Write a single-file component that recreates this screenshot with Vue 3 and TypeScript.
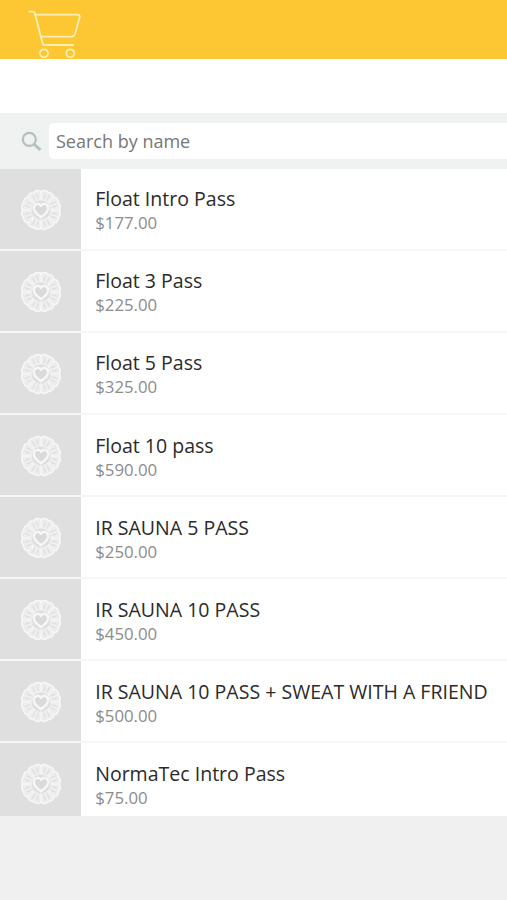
<script setup lang="ts">
interface Pass {
  name: string
  price: string
}

const passes: Pass[] = [
  { name: 'Float Intro Pass', price: '$177.00' },
  { name: 'Float 3 Pass', price: '$225.00' },
  { name: 'Float 5 Pass', price: '$325.00' },
  { name: 'Float 10 pass', price: '$590.00' },
  { name: 'IR SAUNA 5 PASS', price: '$250.00' },
  { name: 'IR SAUNA 10 PASS', price: '$450.00' },
  { name: 'IR SAUNA 10 PASS + SWEAT WITH A FRIEND', price: '$500.00' },
  { name: 'NormaTec Intro Pass', price: '$75.00' },
]

const lobes: number[] = Array.from({ length: 8 }, (_, i) => i * 45 + 22.5)
</script>

<template>
  <main class="shop">
    <header class="topbar">
      <svg class="cart" width="56" height="50" viewBox="0 0 56 50" aria-label="Cart">
        <path d="M1 1.6h3.6q1.7 0 2.2 1.7l7.6 29.4q.6 2.3 2 2.3H45" />
        <path d="M7.2 4.6H49q3.4 0 2.6 3L47.2 23.6q-.8 3-3.4 3H13.2" />
        <circle cx="16" cy="43.3" r="4" />
        <circle cx="42.3" cy="43.3" r="4" />
      </svg>
    </header>
    <section class="search">
      <svg class="glass" width="22" height="22" viewBox="0 0 22 22" aria-hidden="true">
        <circle cx="8.3" cy="8.4" r="6.5" />
        <path d="M13.2 13.3l6.2 5.7" />
      </svg>
      <input class="field" type="text" placeholder="Search by name" />
    </section>
    <ul class="list">
      <li v-for="pass in passes" :key="pass.name" class="row">
        <div class="thumb">
          <svg class="emblem" width="42" height="42" viewBox="-21 -21 42 42" aria-hidden="true">
            <circle class="haze" r="14" />
            <g v-for="a in lobes" :key="a" :transform="`rotate(${a})`">
              <path class="lobe" d="M-6.9 -16.2C-6.4 -19.6 -2.5 -19.6 0 -19C2.5 -19.6 6.4 -19.6 6.9 -16.2" />
              <path class="petal" d="M0 -9.5V-17M-3 -9.5L-3.6 -16.5M3 -9.5L3.6 -16.5" />
              <path class="gap" d="M-1.9 -12.2L-2.2 -15.6M1.9 -12.2L2.2 -15.6" />
              <path class="seam" d="M-6.6 -15.9L-3.9 -9.4" />
            </g>
            <path
              class="heart"
              d="M0 7.2C-3 5 -7.2 2 -7.2 -1.8C-7.2 -6.6 -2 -7.2 0 -4.3C2 -7.2 7.2 -6.6 7.2 -1.8C7.2 2 3 5 0 7.2Z"
            />
          </svg>
        </div>
        <div class="info">
          <span class="name">{{ pass.name }}</span>
          <span class="price">{{ pass.price }}</span>
        </div>
      </li>
    </ul>
  </main>
</template>

<style>
body {
  margin: 0;
  background: #f0f0f0;
}
</style>

<style scoped>
.shop {
  height: 900px;
  overflow: hidden;
  background: #f0f0f0;
  font-family: 'Open Sans', 'Noto Sans', sans-serif;
}
.topbar {
  box-sizing: border-box;
  height: 113px;
  padding: 10px 0 0 28px;
  background: linear-gradient(#fdc633 59px, #fff 59.5px);
}
.cart {
  display: block;
  fill: none;
  stroke: #fff0b8;
  stroke-width: 1.8;
  stroke-linecap: round;
  stroke-linejoin: round;
}
.search {
  box-sizing: border-box;
  display: flex;
  height: 55.5px;
  padding: 10px 0 0 21px;
  background: #f0f1f1;
}
.glass {
  flex: none;
  margin: 8px 6px 0 0;
  fill: none;
  stroke: #b5c0c1;
  stroke-width: 2.3;
}
.glass path {
  stroke-width: 3;
}
.field {
  box-sizing: border-box;
  flex: 1;
  min-width: 0;
  height: 35.5px;
  padding: 1px 0 0 7px;
  border: 0;
  border-radius: 5px 0 0 5px;
  background: #fff;
  font: 18px 'Open Sans', 'Noto Sans', sans-serif;
  outline: none;
}
.field::placeholder {
  color: #777;
  opacity: 1;
}
.list {
  height: 647.5px;
  margin: 0;
  padding: 0;
  overflow: hidden;
  list-style: none;
}
.row {
  box-sizing: border-box;
  display: flex;
  height: 82.15px;
  border-bottom: 2px solid #f6f6f6;
  background: #fff;
}
.thumb {
  box-sizing: border-box;
  flex: none;
  width: 81.3px;
  padding: 20px 0 0 20.3px;
  background: #dfdfdf;
}
.emblem {
  display: block;
  fill: none;
  stroke: #f7f7f7;
  stroke-linecap: round;
  stroke-linejoin: round;
}
.haze {
  stroke: #ebebeb;
  stroke-width: 9;
}
.lobe {
  stroke-width: 1.8;
}
.petal {
  stroke-width: 1;
  opacity: 0.6;
}
.gap {
  stroke: #dedede;
  stroke-width: 1.4;
}
.seam {
  stroke-width: 1.5;
  opacity: 0.8;
}
.heart {
  fill: #dadada;
  stroke-width: 2.4;
}
.info {
  display: flex;
  flex-direction: column;
  padding: 16.65px 0 0 13.9px;
  white-space: nowrap;
}
.name {
  color: #2b2b2b;
  font-size: 19.55px;
  line-height: 27px;
}
.price {
  color: #8c8c8c;
  font-size: 16.8px;
  line-height: 21px;
}
</style>
